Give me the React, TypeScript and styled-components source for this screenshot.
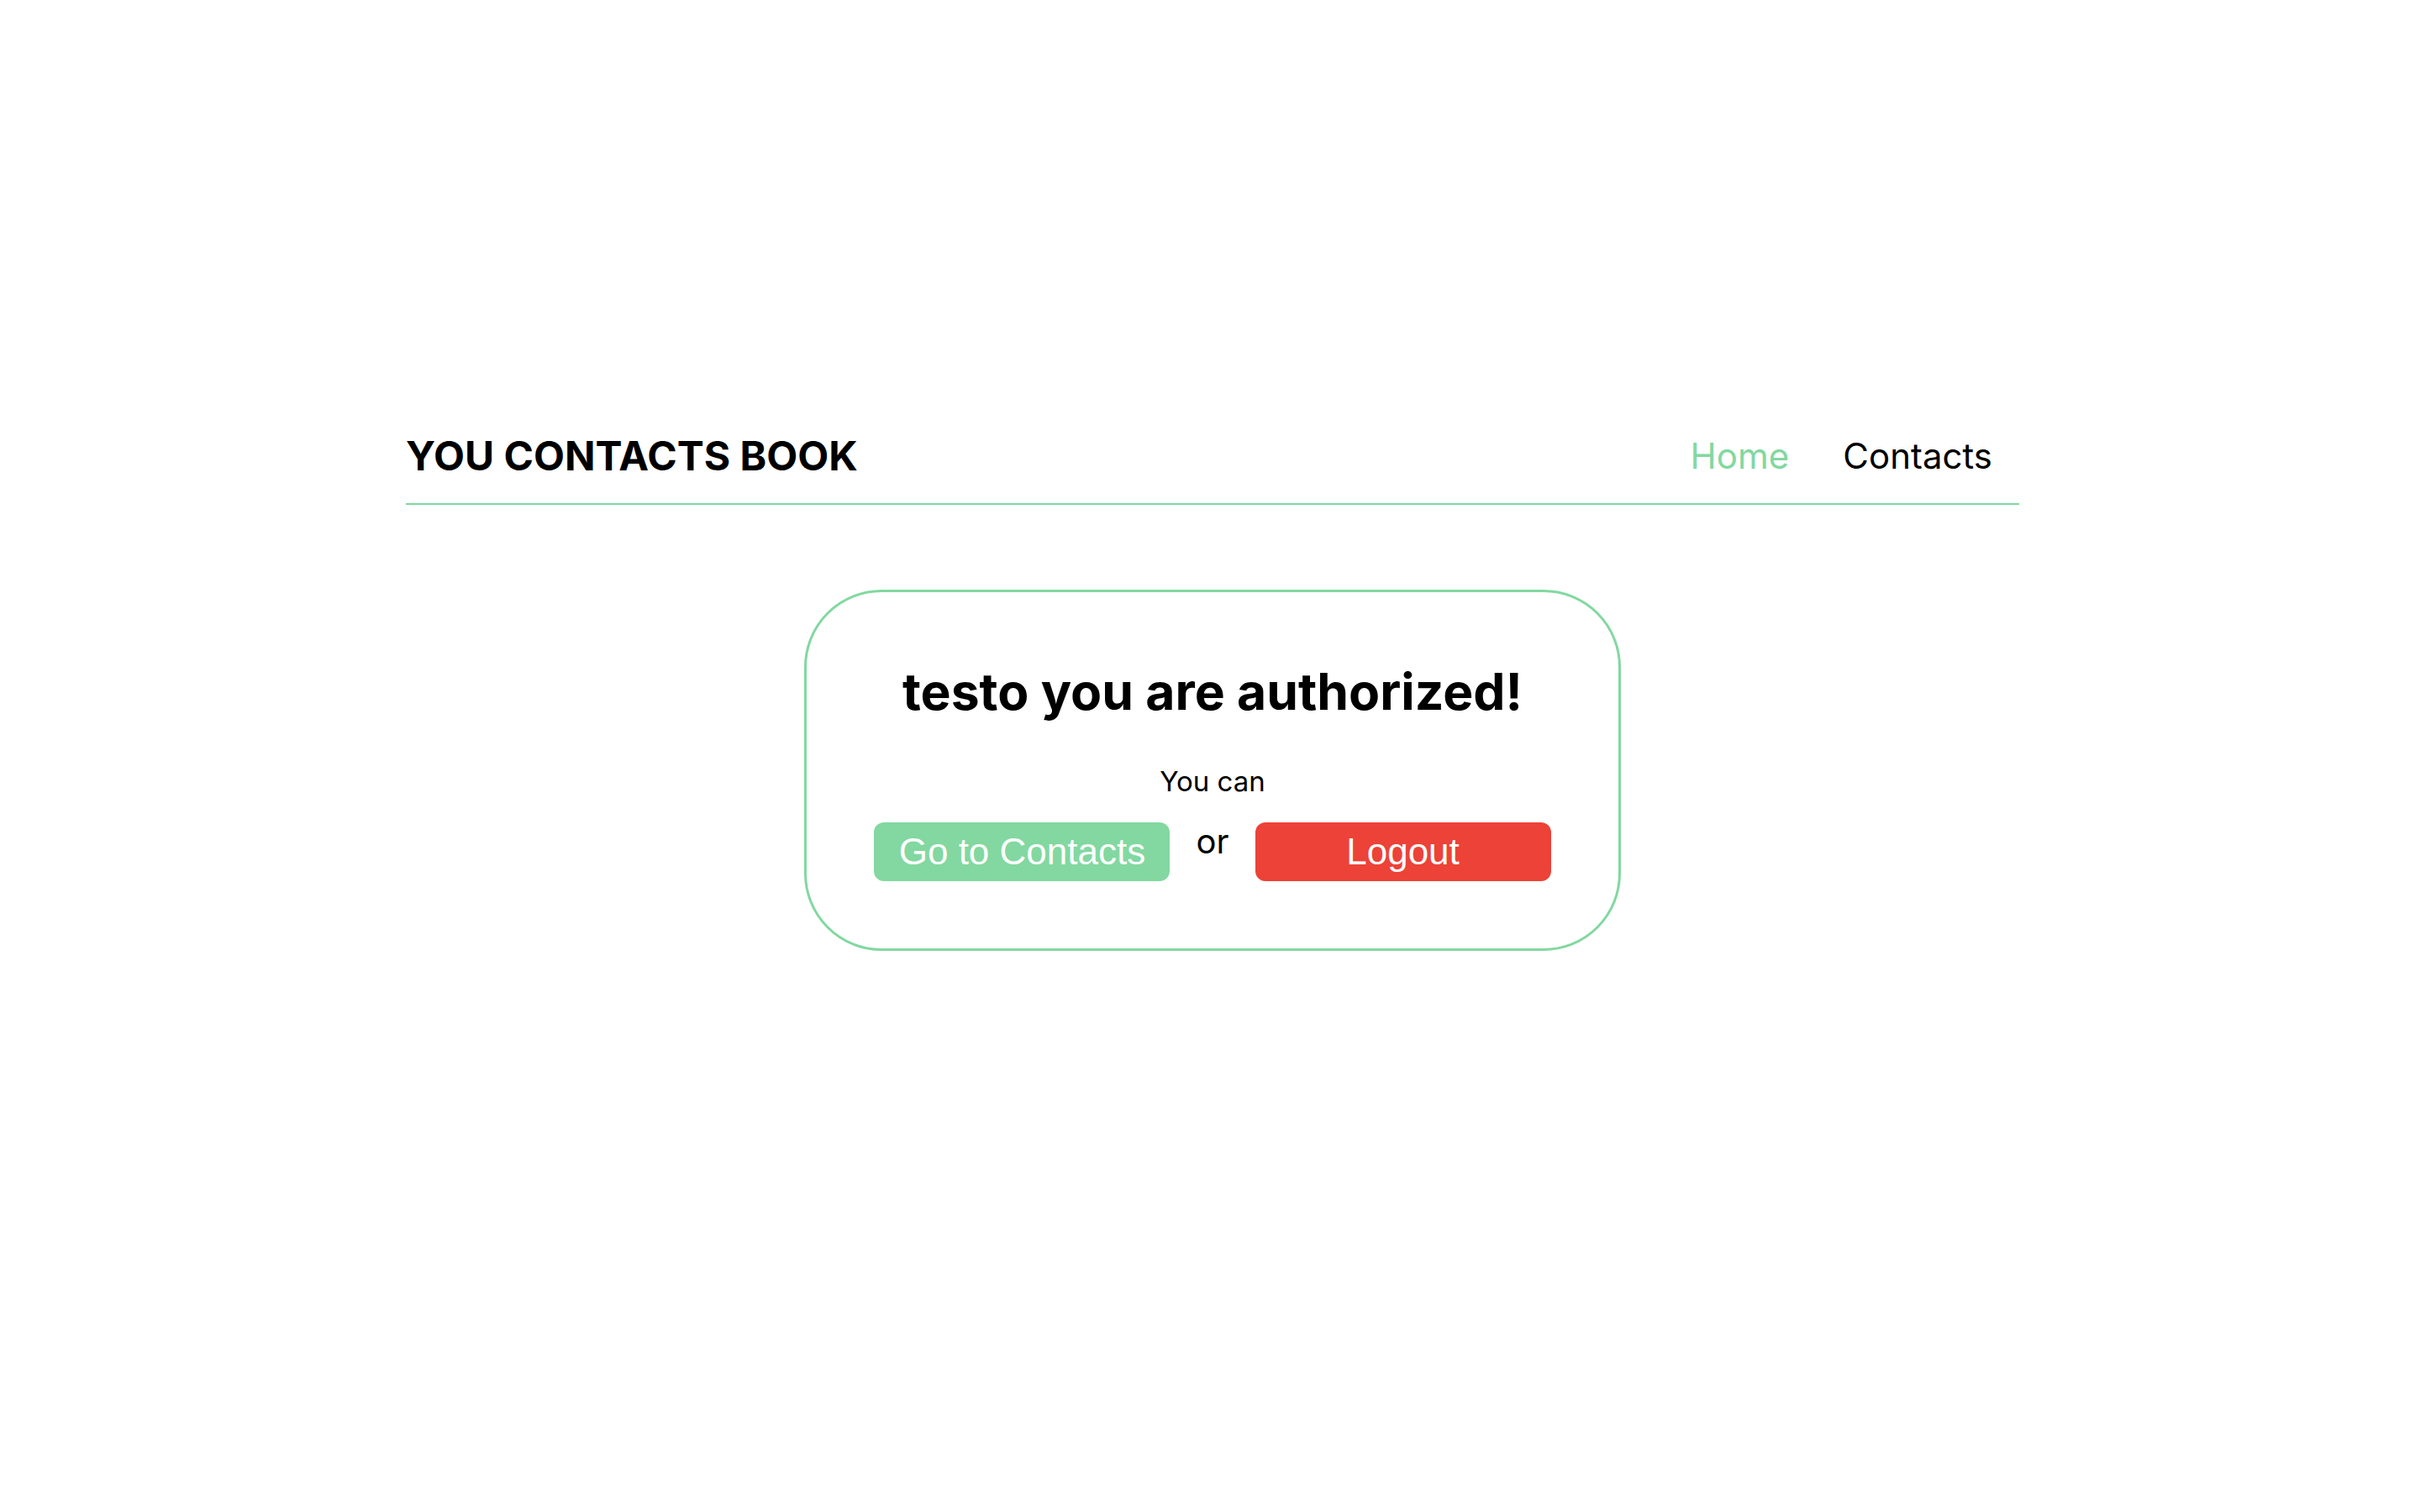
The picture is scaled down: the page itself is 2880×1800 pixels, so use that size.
import { createGlobalStyle } from 'styled-components'
import styled from 'styled-components'

const GREEN = '#82d8a0'
const RED = '#ec4238'

const GlobalStyle = createGlobalStyle`
  html, body {
    margin: 0;
    padding: 0;
    background: #ffffff;
  }
  body {
    font-family: Inter, "Noto Sans", sans-serif;
    color: #000000;
  }
`

const Page = styled.div`
  width: 1920px;
  margin-left: calc(50% - 957px);
  padding-top: 514px;
`

const Header = styled.header`
  display: flex;
  align-items: center;
  justify-content: space-between;
  padding-bottom: 27px;
  border-bottom: 2px solid ${GREEN};
`

const Logo = styled.div`
  font-size: 48px;
  font-weight: 700;
  line-height: 58px;
`

const Nav = styled.nav`
  display: flex;
  align-items: center;
`

const NavLink = styled.a<{ $active?: boolean }>`
  padding: 0 32px;
  font-size: 42px;
  line-height: 50px;
  text-decoration: none;
  color: ${({ $active }) => ($active ? GREEN : '#000000')};
  cursor: pointer;
`

const Main = styled.main`
  display: flex;
  justify-content: center;
  padding-top: 101px;
`

const Card = styled.section`
  display: flex;
  flex-direction: column;
  align-items: center;
  padding: 82px 80px 80px;
  border: 3px solid ${GREEN};
  border-radius: 92px;
`

const Title = styled.h1`
  margin: 0;
  font-size: 60.6px;
  font-weight: 700;
  line-height: 73px;
`

const Lead = styled.p`
  margin: 50px 0 0;
  font-size: 33px;
  line-height: 40px;
`

const Actions = styled.div`
  display: flex;
  align-items: flex-start;
  gap: 31px;
  margin-top: 29px;
`

const Or = styled.span`
  font-size: 40px;
  line-height: 46px;
`

const ActionButton = styled.button<{ $tone: 'green' | 'red' }>`
  width: 352px;
  height: 70px;
  padding: 0;
  border: none;
  border-radius: 12px;
  background: ${({ $tone }) => ($tone === 'green' ? GREEN : RED)};
  color: #ffffff;
  font-family: "Liberation Sans", Arial, sans-serif;
  font-size: 44px;
  cursor: pointer;
`

export default function App() {
  return (
    <>
      <GlobalStyle />
      <Page>
        <Header>
          <Logo>YOU CONTACTS BOOK</Logo>
          <Nav>
            <NavLink $active>Home</NavLink>
            <NavLink>Contacts</NavLink>
          </Nav>
        </Header>
        <Main>
          <Card>
            <Title>testo you are authorized!</Title>
            <Lead>You can</Lead>
            <Actions>
              <ActionButton $tone="green">Go to Contacts</ActionButton>
              <Or>or</Or>
              <ActionButton $tone="red">Logout</ActionButton>
            </Actions>
          </Card>
        </Main>
      </Page>
    </>
  )
}
